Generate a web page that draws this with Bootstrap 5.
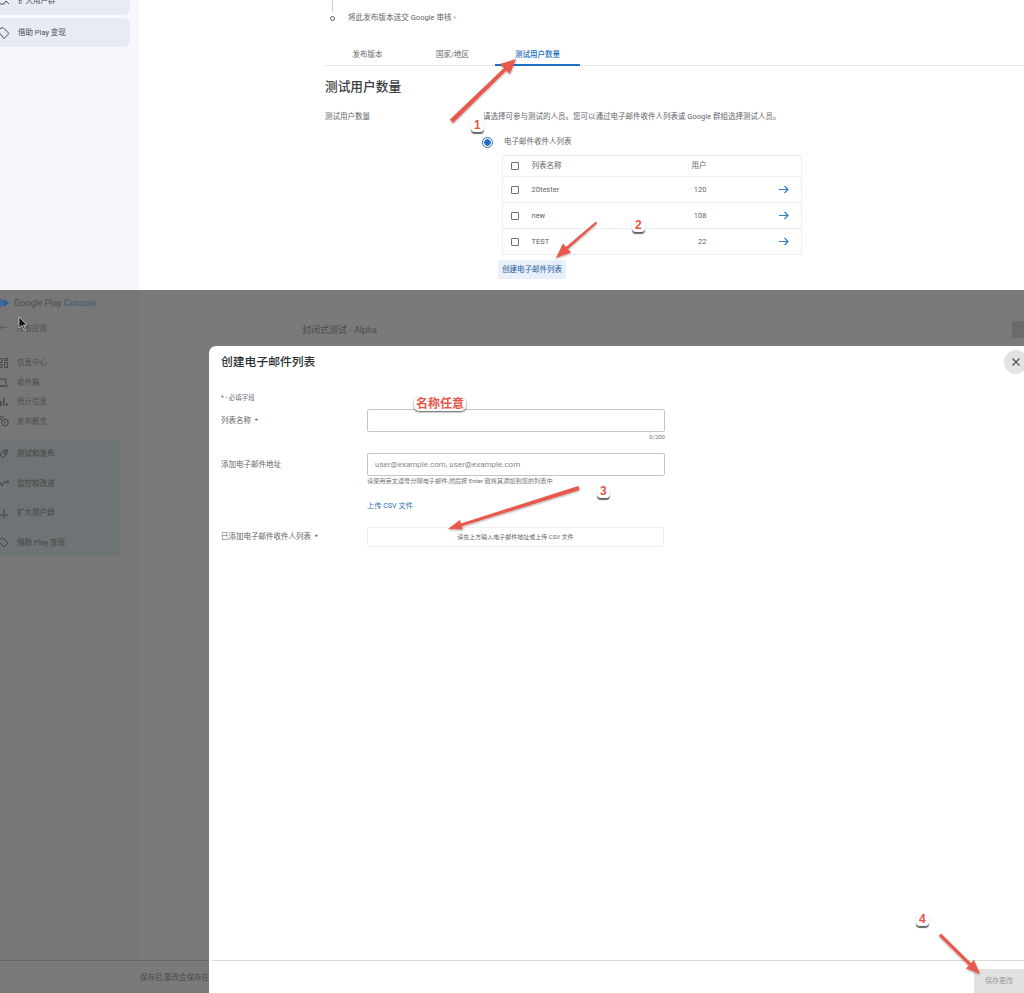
<!DOCTYPE html>
<html lang="zh-CN">

<head>
    <title>创建电子邮件列表</title>
    <meta charset="utf-8">
    <meta name="viewport" content="width=device-width, initial-scale=1">
    <link href="https://cdn.jsdelivr.net/npm/bootstrap@5.3.2/dist/css/bootstrap.min.css" rel="stylesheet">
    <style>
        html,
        body {
            height: 993px;
            overflow: hidden;
        }

        body {
            position: relative;
            font-family: Roboto, "Noto Sans CJK SC", sans-serif;
            font-size: 7.5px;
            line-height: 12px;
            color: #5f6368;
            background: #fff;
        }

        /* top half of the picture */
        .top-shot {
            height: 290px;
            overflow: hidden;
        }

        .top-side {
            width: 139px;
            flex-shrink: 0;
            background: #f7f8fd;
        }

        .side-pill {
            width: 130px;
            height: 29px;
            margin-bottom: 3px;
            border-radius: 0 6px 6px 0;
            background: #e8ebf4;
            color: #4a4f55;
        }

        .side-pill:first-child {
            margin-top: -14px;
        }

        .pill-text {
            margin-left: 6px;
        }

        .top-main {
            padding-left: 186px;
        }

        .step-line {
            width: 1px;
            height: 12px;
            margin-left: 7px;
            background: #c9ccd0;
        }

        .step-row {
            height: 12px;
            font-size: 7.6px;
        }

        .step-dot {
            width: 5px;
            height: 5px;
            margin-left: 5px;
            margin-right: 13px;
            border: 1px solid #5f6368;
            border-radius: 50%;
        }

        .tab-bar {
            margin-top: 13px;
            height: 29px;
            border-bottom: 1px solid #e6e7e9;
        }

        .tab-item {
            width: 85px;
            color: #5f6368;
            padding-top: 12px;
        }

        .tab-item.active-tab {
            color: #1f6fc4;
            font-weight: 500;
            border-bottom: 2px solid #1f6fc4;
            height: 29px;
        }

        .page-title {
            margin: 12px 0 0;
            font-size: 12.7px;
            line-height: 17px;
            font-weight: 500;
            color: #3c4043;
        }

        .field-row {
            margin-top: 16px;
        }

        .field-name {
            width: 158px;
        }

        .radio-row {
            margin: 13px 0 0 158px;
            height: 12px;
        }

        .radio-mark {
            width: 11px;
            height: 11px;
            margin: 0 11px 0 -1px;
            border: 1px solid #1f6fc4;
            border-radius: 50%;
            background: radial-gradient(circle, #1f6fc4 0 3px, #fff 3.5px);
        }

        .list-table {
            width: 300px;
            margin: 7px 0 0 177px;
            border: 1px solid #eceef0;
            border-collapse: collapse;
            font-size: 7.5px;
        }

        .list-table td,
        .list-table th {
            padding: 0;
            height: 26px;
            font-weight: 400;
            color: #5f6368;
            border-bottom: 1px solid #eceef0;
            background: transparent;
            vertical-align: middle;
        }

        .list-table th {
            height: 21px;
        }

        .box-cell {
            width: 29px;
            padding-left: 8px !important;
        }

        .box-mark {
            display: block;
            width: 8px;
            height: 8px;
            border: 1px solid #6d7175;
            border-radius: 1px;
        }

        .num-cell {
            width: 40px;
            text-align: right;
        }

        .go-cell {
            width: 95px;
            text-align: right;
            padding-right: 12px !important;
        }

        .make-list {
            display: inline-block;
            margin: 5px 0 0 173px;
            padding: 4px;
            height: 19px;
            border-radius: 2px;
            background: #e8effb;
            color: #1d5a97;
            font-size: 7.5px;
            line-height: 11px;
            text-decoration: none;
        }

        /* bottom half, behind the dialog */
        .bottom-shot {
            height: 703px;
            background: #7a7a7a;
            color: #4b4b4b;
        }

        .dim-side {
            width: 139px;
            flex-shrink: 0;
            background: #777;
        }

        .dim-logo {
            height: 26px;
            padding-top: 7px;
            font-size: 9px;
            color: #4e4e4e;
        }

        .dim-logo b {
            font-weight: 400;
            color: #3f5a78;
        }

        .dim-link {
            height: 19.7px;
            color: #4d4d4d;
        }

        .dim-back {
            height: 26px;
            margin-bottom: 11px;
        }

        .dim-icon {
            width: 17px;
            flex-shrink: 0;
            overflow: hidden;
        }

        .dim-group {
            width: 120px;
            height: 116px;
            margin-top: 8px;
            background: #6e7476;
        }

        .dim-group .dim-link {
            height: 29.4px;
            font-weight: 500;
        }

        .dim-main {
            padding: 34px 0 0 163px;
            font-size: 9px;
        }

        .dim-btn {
            width: 12px;
            height: 17px;
            margin-top: -3px;
            background: #6b6b6b;
        }

        .dim-foot {
            height: 33px;
            padding: 11px 0 0 140px;
            border-top: 1px solid #666;
            white-space: nowrap;
        }

        /* dialog */
        .email-dialog {
            position: absolute;
            left: 209px;
            top: 346px;
            right: 0;
            bottom: 0;
            background: #fff;
            border-radius: 7px 0 0 0;
        }

        .dialog-title {
            margin: 8px 0 0 12px;
            font-size: 11.8px;
            line-height: 16px;
            font-weight: 500;
            color: #2b2e31;
        }

        .close-round {
            position: absolute;
            top: 4px;
            right: -4px;
            width: 24px;
            height: 24px;
            padding: 0;
            border: 0;
            border-radius: 50%;
            background: #e3e3e3;
        }

        .dialog-body {
            padding: 24px 0 0 12px;
            width: 456px;
        }

        .form-tag {
            width: 146px;
            flex-shrink: 0;
        }

        .line-input.form-control {
            width: 298px;
            height: 23px;
            padding: 0 7px;
            border: 1px solid #c4c6c8;
            border-radius: 2px;
            font-size: 8px;
            color: #5f6368;
        }

        .line-input.form-control::placeholder {
            color: #85888c;
        }

        .tiny-note {
            font-size: 6.2px;
            line-height: 8px;
            color: #6f7377;
        }

        .need-note {
            font-size: 6.5px;
        }

        .name-row {
            margin-top: 7px;
        }

        .mail-row {
            margin-top: 12px;
        }

        .added-row {
            margin-top: 15px;
        }

        .tag-name,
        .tag-mail {
            padding-top: 6px;
        }

        .tag-added {
            padding-top: 4px;
        }

        .count-note {
            margin-top: 1px;
            font-size: 6px;
        }

        .hint-note {
            margin-top: 1px;
        }

        .csv-link {
            display: block;
            margin-top: 15px;
            color: #2a73b5;
            text-decoration: none;
            font-size: 7.2px;
        }

        .empty-box {
            width: 297px;
            height: 20px;
            border: 1px solid #eeeff0;
            border-radius: 2px;
            font-size: 6px;
            line-height: 18px;
            color: #5f6368;
        }

        .dialog-foot {
            margin-left: 3px;
            height: 33px;
            border-top: 1px solid #dcdcdc;
        }

        .save-btn {
            width: 50px;
            height: 24px;
            margin-top: 8px;
            padding: 0;
            border: 0;
            border-radius: 0;
            background: #e1e1e1;
            color: #9b9b9b;
            font-size: 7px;
        }

        /* red notes drawn on top of the screenshot */
        .note-layer {
            position: absolute;
            left: 0;
            top: 0;
            pointer-events: none;
        }

        .note-num {
            position: absolute;
            font-family: "Liberation Sans", sans-serif;
            font-size: 12px;
            line-height: 13px;
            font-weight: 700;
            color: #e8544a;
            padding: 0 3px;
            border-radius: 4px;
            background: #fff;
            box-shadow: 0 2px 1px #666;
        }

        .note-words {
            position: absolute;
            left: 414px;
            top: 397px;
            padding: 0 2px;
            font-size: 12px;
            line-height: 14px;
            font-weight: 700;
            color: #e8544a;
            border-radius: 5px;
            background: #fff;
            box-shadow: 0 1px 2px #555;
        }
    </style>
</head>

<body>
    <div class="top-shot d-flex">
        <div class="top-side">
            <div class="side-pill d-flex align-items-center">
                <svg width="12" height="12" viewBox="0 0 12 12" fill="none" stroke="#4a4f55"><path d="M0 9h4l2-3 3 3" /></svg>
                <span class="pill-text">扩大用户群</span>
            </div>
            <div class="side-pill d-flex align-items-center">
                <svg width="12" height="12" viewBox="0 0 12 12" fill="none" stroke="#4a4f55"><path d="M-3 3L3 0.5 9 6.500 4 11.500z" /></svg>
                <span class="pill-text">借助 Play 变现</span>
            </div>
        </div>
        <div class="top-main flex-grow-1">
            <div class="step-line"></div>
            <div class="step-row d-flex align-items-center">
                <span class="step-dot"></span>将此发布版本送交 Google 审核 ›
            </div>
            <div class="tab-bar d-flex">
                <div class="tab-item text-center">发布版本</div>
                <div class="tab-item text-center">国家/地区</div>
                <div class="tab-item active-tab text-center">测试用户数量</div>
            </div>
            <h2 class="page-title">测试用户数量</h2>
            <div class="field-row d-flex">
                <div class="field-name">测试用户数量</div>
                <div>请选择可参与测试的人员。您可以通过电子邮件收件人列表或 Google 群组选择测试人员。</div>
            </div>
            <div class="radio-row d-flex align-items-center">
                <span class="radio-mark"></span>电子邮件收件人列表
            </div>
            <table class="list-table">
                <tr>
                    <th class="box-cell"><span class="box-mark"></span></th>
                    <th>列表名称</th>
                    <th class="num-cell">用户</th>
                    <th class="go-cell"></th>
                </tr>
                <tr>
                    <td class="box-cell"><span class="box-mark"></span></td>
                    <td>20tester</td>
                    <td class="num-cell">120</td>
                    <td class="go-cell"><svg width="10" height="9" viewBox="0 0 10 9" fill="none" stroke="#2f7dc8" stroke-width="1.200"><path d="M0 4.500h9M5.500 1l3.500 3.500L5.500 8" /></svg></td>
                </tr>
                <tr>
                    <td class="box-cell"><span class="box-mark"></span></td>
                    <td>new</td>
                    <td class="num-cell">108</td>
                    <td class="go-cell"><svg width="10" height="9" viewBox="0 0 10 9" fill="none" stroke="#2f7dc8" stroke-width="1.200"><path d="M0 4.500h9M5.500 1l3.500 3.500L5.500 8" /></svg></td>
                </tr>
                <tr>
                    <td class="box-cell"><span class="box-mark"></span></td>
                    <td>TEST</td>
                    <td class="num-cell">22</td>
                    <td class="go-cell"><svg width="10" height="9" viewBox="0 0 10 9" fill="none" stroke="#2f7dc8" stroke-width="1.200"><path d="M0 4.500h9M5.500 1l3.500 3.500L5.500 8" /></svg></td>
                </tr>
            </table>
            <a class="make-list" href="#">创建电子邮件列表</a>
        </div>
    </div>

    <div class="bottom-shot d-flex flex-column">
        <div class="d-flex flex-grow-1">
            <div class="dim-side">
                <div class="dim-logo d-flex align-items-start">
                    <svg width="14" height="12" viewBox="0 0 14 12" class="flex-shrink-0"><path d="M-3 0l12 6-12 6z" fill="#3d6a9c" /><path d="M4 2.500L9 6 4 9.500z" fill="#2f5d8e" /></svg>
                    <span>Google Play <b>Console</b></span>
                </div>
                <div class="dim-link dim-back d-flex align-items-center">
                    <span class="dim-icon">←</span><span>所有应用</span>
                </div>
                <div class="dim-link d-flex align-items-center">
                    <span class="dim-icon"><svg width="8" height="10" viewBox="0 0 8 10" fill="none" stroke="#444"><path d="M0 .500h2v4H0M0 6.500h2v3H0M4.500 .500h3v2h-3zM4.500 4.500h3v5h-3z" /></svg></span>信息中心
                </div>
                <div class="dim-link d-flex align-items-center">
                    <span class="dim-icon"><svg width="9" height="10" viewBox="0 0 9 10" fill="none" stroke="#444"><path d="M0 1h6v7H0M0 8h6" /><circle cx="7.500" cy="8.500" r="1" fill="#2f5d8e" stroke="none" /></svg></span>收件箱
                </div>
                <div class="dim-link d-flex align-items-center">
                    <span class="dim-icon"><svg width="8" height="10" viewBox="0 0 8 10" fill="#444"><path d="M0 4h1.500v5H0zM3 1h1.500v8H3zM6 6h1.500v3H6z" /></svg></span>统计信息
                </div>
                <div class="dim-link d-flex align-items-center">
                    <span class="dim-icon"><svg width="9" height="11" viewBox="0 0 9 11" fill="none" stroke="#444"><path d="M0 1h4M0 3h2" /><circle cx="5" cy="6.500" r="3.300" /><path d="M5 5v2" /></svg></span>发布概览
                </div>
                <div class="dim-group">
                    <div class="dim-link d-flex align-items-center">
                        <span class="dim-icon"><svg width="9" height="10" viewBox="0 0 9 10" fill="none" stroke="#444"><path d="M8 1L3 2 0 6l3 3 3-3z" /><circle cx="5" cy="4" r="1" /></svg></span>测试和发布
                    </div>
                    <div class="dim-link d-flex align-items-center">
                        <span class="dim-icon"><svg width="9" height="8" viewBox="0 0 9 8" fill="none" stroke="#444"><path d="M0 2l2 4 2-4h2" /><circle cx="7.500" cy="2" r="1.200" /></svg></span>监控和改进
                    </div>
                    <div class="dim-link d-flex align-items-center">
                        <span class="dim-icon"><svg width="9" height="10" viewBox="0 0 9 10" fill="none" stroke="#444"><path d="M0 7h8M4 1v6M2 9h3" /></svg></span>扩大用户群
                    </div>
                    <div class="dim-link d-flex align-items-center">
                        <span class="dim-icon"><svg width="9" height="11" viewBox="0 0 9 11" fill="none" stroke="#444"><path d="M0 2l3-1 5 5-4 4-4-4" /></svg></span>借助 Play 变现
                    </div>
                </div>
            </div>
            <div class="dim-main flex-grow-1 d-flex justify-content-between align-items-start">
                <span>封闭式测试 - Alpha</span>
                <span class="dim-btn"></span>
            </div>
        </div>
        <div class="dim-foot">保存后,要改会保存在</div>
    </div>

    <div class="email-dialog d-flex flex-column">
        <h3 class="dialog-title">创建电子邮件列表</h3>
        <button type="button" class="close-round d-flex align-items-center justify-content-center" aria-label="关闭">
            <svg width="8" height="8" viewBox="0 0 8 8" stroke="#444" stroke-width="1.100"><path d="M.5.5l7 7M7.500.5l-7 7" /></svg>
        </button>
        <div class="dialog-body flex-grow-1">
            <div class="tiny-note need-note">* - 必填字段</div>
            <div class="name-row d-flex">
                <div class="form-tag tag-name">列表名称 &nbsp;*</div>
                <div>
                    <input class="form-control line-input" type="text">
                    <div class="tiny-note count-note text-end">0/200</div>
                </div>
            </div>
            <div class="mail-row d-flex">
                <div class="form-tag tag-mail">添加电子邮件地址</div>
                <div>
                    <input class="form-control line-input" type="text" placeholder="user@example.com, user@example.com">
                    <div class="tiny-note hint-note">请使用英文逗号分隔电子邮件,然后按 Enter 键将其添加到您的列表中</div>
                    <a class="csv-link" href="#">上传 CSV 文件</a>
                </div>
            </div>
            <div class="added-row d-flex">
                <div class="form-tag tag-added">已添加电子邮件收件人列表 &nbsp;*</div>
                <div class="empty-box text-center">请在上方输入电子邮件地址或上传 CSV 文件</div>
            </div>
        </div>
        <div class="dialog-foot d-flex justify-content-end">
            <button type="button" class="save-btn" disabled>保存更改</button>
        </div>
    </div>

    <svg class="note-layer" width="1024" height="993" viewBox="0 0 1024 993">
        <defs>
            <filter id="noteShadow" x="-20%" y="-20%" width="140%" height="140%">
                <feDropShadow dx="0" dy="1" stdDeviation="1" flood-color="#000" flood-opacity=".35" />
            </filter>
        </defs>
        <g fill="#e8584d" filter="url(#noteShadow)">
            <path d="M450 119.500L504 68l-4-4 16-5-6 15-3.500-3.500L453 123z" />
            <path d="M597 223.500L568 249l3 3.500-15 5.500 7-14.500 3 3.500 30-25.500z" />
            <path d="M578.400 486.100L460.900 523.400 459.900 520 448 529 462.900 529.600 461.800 526.200 579.600 489.900z" />
            <path d="M941 933.500L971 963l3-3 6 14-14-5.500 3-3L939 936z" />
        </g>
        <path d="M19 317v11l3-2.500 2 4.500 1.500-.7-2-4.300H27z" fill="#111" stroke="#fff" stroke-width=".6" />
    </svg>
    <span class="note-num" style="left:471px;top:119px">1</span>
    <span class="note-num" style="left:632px;top:219px">2</span>
    <span class="note-num" style="left:597px;top:485px">3</span>
    <span class="note-num" style="left:916px;top:913px">4</span>
    <span class="note-words">名称任意</span>
    <script src="https://cdn.jsdelivr.net/npm/bootstrap@5.3.2/dist/js/bootstrap.bundle.min.js"></script>
</body>

</html>
